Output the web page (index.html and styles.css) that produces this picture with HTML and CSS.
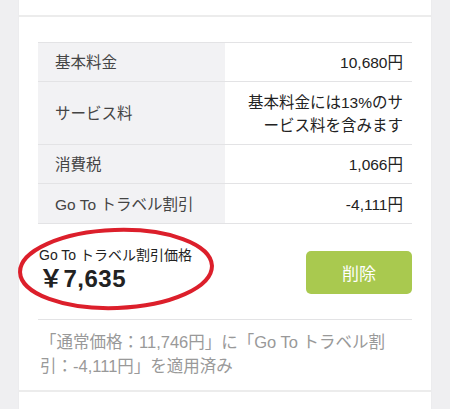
FILE: index.html
```html
<!DOCTYPE html>
<html lang="ja">
<head>
<meta charset="utf-8">
<link rel="stylesheet" href="styles.css">
</head>
<body>
<div class="card">
  <div class="card-top"></div>
  <div class="card-body">
    <table class="fees">
      <tr><th>基本料金</th><td>10,680円</td></tr>
      <tr><th>サービス料</th><td class="multi">基本料金には13%のサ<br>ービス料を含みます</td></tr>
      <tr><th>消費税</th><td>1,066円</td></tr>
      <tr><th>Go To トラベル割引</th><td class="last">-4,111円</td></tr>
    </table>
    <div class="total-row">
      <div class="total">
        <div class="total-label">Go To トラベル割引価格</div>
        <div class="total-price">￥7,635</div>
        <svg class="circle" width="200" height="86" viewBox="0 0 200 86"><ellipse cx="99" cy="42" rx="96" ry="39" fill="none" stroke="#dc1f2b" stroke-width="4" transform="rotate(-2 99 42)"/></svg>
      </div>
      <button class="delete">削除</button>
    </div>
    <p class="note">「通常価格：11,746円」に「Go To トラベル割<br>引：-4,111円」を適用済み</p>
  </div>
  <div class="card-bottom"></div>
</div>
</body>
</html>
```
FILE: styles.css
```css
html, body {
  margin: 0;
  padding: 0;
}
body {
  background: #efeff1;
  font-family: "Liberation Sans", "Noto Sans CJK JP", sans-serif;
  color: #333;
  height: 409px;
  overflow: hidden;
}
.card {
  margin: 0 19px;
  background: #fff;
  box-shadow: 0 0 1px rgba(0,0,0,0.08);
}
.card-top {
  height: 15px;
  border-bottom: 2px solid #ececec;
}
.card-body {
  padding: 25px 19px 0;
}
.fees {
  width: 100%;
  border-collapse: collapse;
  font-size: 15.5px;
  border-top: 1px solid #e3e3e5;
}
.fees th, .fees td {
  border-bottom: 1px solid #e3e3e5;
  padding: 8px 9px 7px 17px;
  line-height: 23px;
  font-weight: normal;
}
.fees td.multi {
  padding-top: 9px;
}
.fees td.last {
  padding-top: 9px;
}
.fees th {
  width: 50%;
  text-align: left;
  background: #f2f2f4;
  color: #444;
}
.fees td {
  text-align: right;
  color: #222;
}
.total-row {
  display: flex;
  justify-content: space-between;
  align-items: flex-end;
  margin-top: 22px;
}
.total {
  position: relative;
  padding-left: 1px;
}
.total-label {
  font-size: 14px;
  line-height: 18px;
  color: #222;
}
.total-price {
  font-size: 24px;
  font-weight: bold;
  line-height: 30px;
  color: #222;
  letter-spacing: 0.5px;
}
.circle {
  position: absolute;
  left: -21px;
  top: -19px;
}
.delete {
  width: 106px;
  height: 43px;
  border: none;
  border-radius: 5px;
  background: #a9c94f;
  color: #fff;
  font-size: 17px;
  font-family: "Noto Sans CJK JP", sans-serif;
  padding: 0;
}
.note {
  margin: 25px 0 0;
  border-top: 1px solid #e3e3e5;
  padding: 10px 0 12px 2px;
  font-size: 16.5px;
  line-height: 24px;
  color: #999;
}
.card-bottom {
  height: 18px;
  border-top: 2px solid #ececec;
}
```
